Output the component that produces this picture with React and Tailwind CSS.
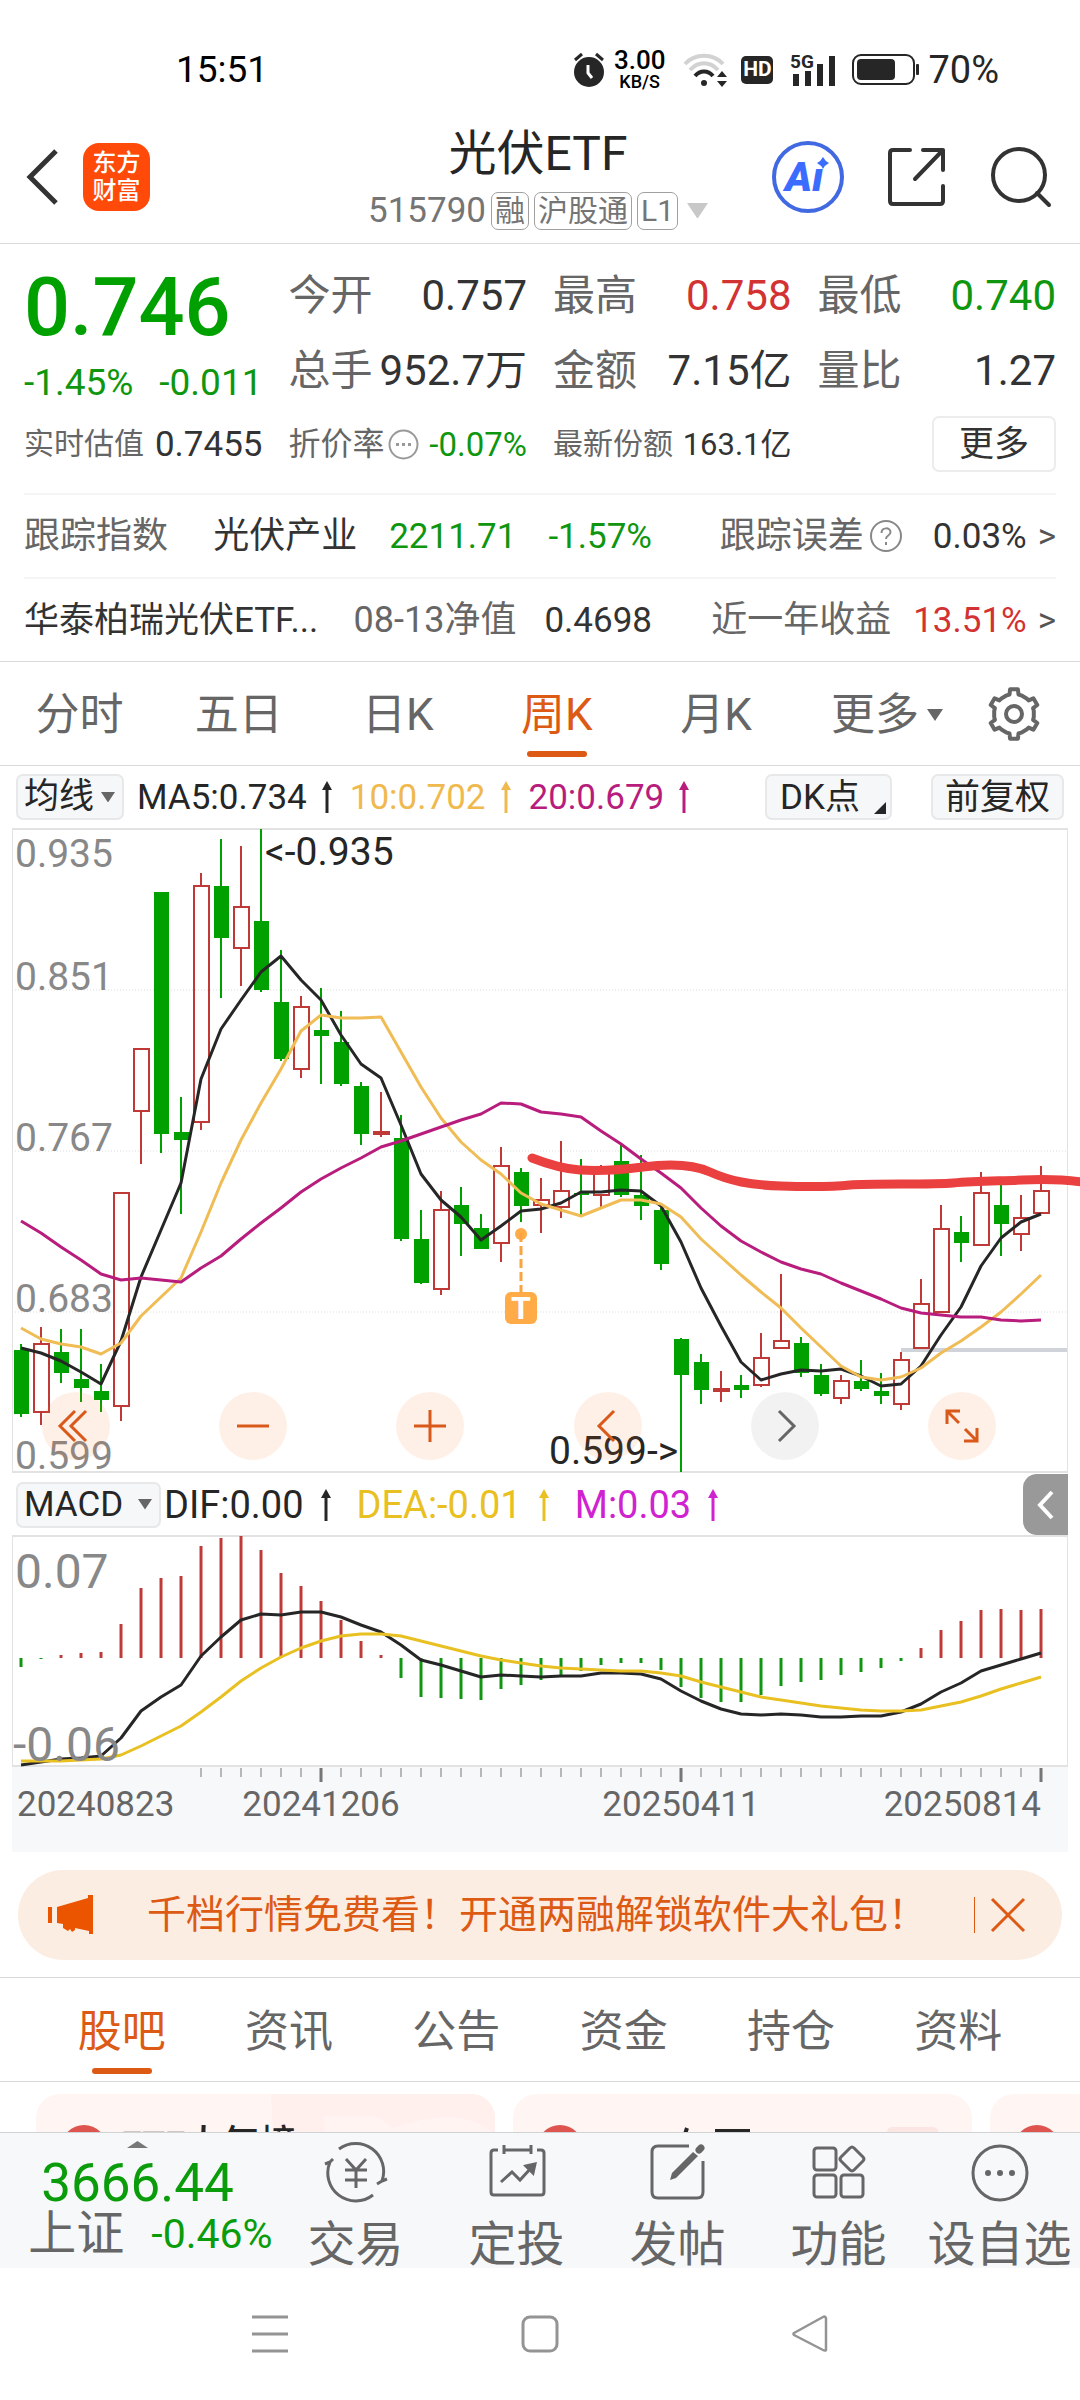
import { useState } from 'react';

const RED = '#bf3a36';
const GREEN = '#00a000';
const STEP = 20;
const FIRST_X = 21;

// Weekly candles: [direction, high, body top, body bottom, low] in chart units
const candles = [
  ['down', 1344, 1350, 1414, 1417],
  ['up', 1327, 1344, 1412, 1425],
  ['down', 1329, 1352, 1373, 1383],
  ['down', 1329, 1379, 1388, 1402],
  ['down', 1364, 1391, 1400, 1412],
  ['up', 1193, 1193, 1406, 1421],
  ['up', 1049, 1049, 1111, 1164],
  ['down', 892, 892, 1134, 1153],
  ['down', 1097, 1132, 1140, 1214],
  ['up', 873, 886, 1122, 1130],
  ['down', 839, 886, 938, 998],
  ['up', 846, 907, 948, 986],
  ['down', 829, 921, 990, 992],
  ['down', 950, 1002, 1059, 1061],
  ['up', 996, 1007, 1069, 1078],
  ['down', 988, 1030, 1036, 1084],
  ['down', 1011, 1042, 1084, 1086],
  ['down', 1082, 1086, 1134, 1145],
  ['up', 1092, 1132, 1134, 1137],
  ['down', 1115, 1138, 1239, 1241],
  ['down', 1210, 1239, 1283, 1284],
  ['up', 1191, 1210, 1289, 1295],
  ['down', 1187, 1205, 1224, 1256],
  ['down', 1214, 1228, 1249, 1249],
  ['up', 1147, 1166, 1243, 1262],
  ['down', 1168, 1172, 1206, 1222],
  ['up', 1178, 1200, 1205, 1233],
  ['up', 1141, 1191, 1207, 1218],
  ['down', 1159, 1193, 1195, 1217],
  ['up', 1165, 1169, 1195, 1208],
  ['down', 1144, 1161, 1195, 1197],
  ['down', 1155, 1195, 1206, 1220],
  ['down', 1208, 1210, 1264, 1270],
  ['down', 1338, 1339, 1375, 1472],
  ['down', 1354, 1362, 1390, 1404],
  ['up', 1371, 1389, 1391, 1402],
  ['down', 1375, 1385, 1390, 1398],
  ['up', 1333, 1358, 1385, 1387],
  ['up', 1274, 1341, 1348, 1348],
  ['down', 1337, 1343, 1373, 1377],
  ['down', 1364, 1375, 1394, 1396],
  ['up', 1375, 1381, 1398, 1404],
  ['down', 1360, 1381, 1389, 1391],
  ['down', 1373, 1391, 1396, 1404],
  ['up', 1352, 1360, 1404, 1410],
  ['up', 1279, 1304, 1348, 1348],
  ['up', 1205, 1229, 1312, 1312],
  ['down', 1216, 1232, 1243, 1262],
  ['up', 1172, 1193, 1245, 1245],
  ['down', 1182, 1205, 1224, 1256],
  ['up', 1195, 1218, 1234, 1251],
  ['up', 1166, 1191, 1213, 1213],
];

const ma5 = [1348, 1353, 1361, 1372, 1384, 1341, 1277, 1230, 1183, 1079, 1029, 1000, 972, 956, 980, 1000, 1035, 1064, 1078, 1125, 1174, 1200, 1217, 1240, 1226, 1211, 1209, 1203, 1192, 1192, 1190, 1191, 1206, 1242, 1288, 1326, 1362, 1380, 1374, 1370, 1371, 1369, 1376, 1386, 1384, 1366, 1335, 1307, 1266, 1238, 1222, 1214];
const ma10 = [1328, 1339, 1344, 1347, 1354, 1343, 1316, 1297, 1278, 1232, 1183, 1140, 1103, 1069, 1031, 1015, 1018, 1018, 1017, 1052, 1087, 1118, 1142, 1160, 1174, 1193, 1204, 1210, 1216, 1208, 1200, 1200, 1204, 1217, 1239, 1257, 1275, 1292, 1308, 1328, 1347, 1366, 1377, 1380, 1377, 1368, 1353, 1341, 1327, 1312, 1294, 1275];
const ma20 = [1221, 1233, 1247, 1260, 1274, 1280, 1278, 1280, 1282, 1268, 1256, 1239, 1223, 1208, 1192, 1179, 1168, 1158, 1147, 1141, 1134, 1127, 1120, 1114, 1103, 1104, 1112, 1114, 1117, 1131, 1144, 1159, 1173, 1188, 1208, 1226, 1241, 1252, 1262, 1269, 1274, 1283, 1291, 1299, 1308, 1313, 1315, 1317, 1317, 1320, 1321, 1320];

const MACD_ZERO = 1658;
const macdBars = [1667, 1659, 1655, 1653, 1652, 1624, 1588, 1578, 1576, 1546, 1538, 1536, 1550, 1573, 1586, 1601, 1620, 1641, 1655, 1678, 1697, 1698, 1699, 1700, 1689, 1685, 1680, 1675, 1671, 1665, 1663, 1663, 1670, 1687, 1698, 1702, 1702, 1695, 1686, 1682, 1680, 1675, 1672, 1668, 1661, 1648, 1630, 1621, 1610, 1609, 1610, 1609];
const dif = [1765, 1762, 1759, 1758, 1756, 1738, 1711, 1697, 1685, 1656, 1637, 1620, 1614, 1615, 1612, 1612, 1617, 1625, 1632, 1645, 1660, 1665, 1671, 1677, 1675, 1676, 1677, 1676, 1676, 1673, 1673, 1674, 1679, 1691, 1701, 1709, 1714, 1715, 1714, 1715, 1717, 1717, 1716, 1716, 1712, 1704, 1692, 1683, 1671, 1665, 1659, 1653];
const dea = [1761, 1761, 1761, 1760, 1759, 1755, 1746, 1736, 1726, 1712, 1697, 1681, 1668, 1657, 1648, 1641, 1636, 1634, 1634, 1636, 1641, 1646, 1651, 1656, 1660, 1663, 1666, 1668, 1669, 1670, 1671, 1671, 1673, 1676, 1682, 1687, 1692, 1697, 1700, 1703, 1706, 1708, 1710, 1711, 1711, 1710, 1706, 1702, 1696, 1689, 1683, 1677];

const xAt = (i) => FIRST_X + i * STEP;
const toPoints = (values) => values.map((y, i) => `${xAt(i)},${y}`).join(' ');

// Six-tooth gear outline around (29, 29)
function gearPath() {
  const pts = [];
  for (let i = 0; i < 6; i++) {
    const a = i * 60 - 90;
    [[-21, 20], [-13, 20], [-9, 25], [9, 25], [13, 20], [21, 20]].forEach(([d, r]) => {
      const rad = ((a + d) * Math.PI) / 180;
      pts.push(`${(29 + r * Math.cos(rad)).toFixed(1)} ${(29 + r * Math.sin(rad)).toFixed(1)}`);
    });
  }
  return `M${pts.join('L')}Z`;
}

function Triangle({ className }) {
  return (
    <svg viewBox="0 0 16 12" className={className} fill="currentColor" aria-hidden="true">
      <path d="M0 0H16L8 12Z" />
    </svg>
  );
}

function UpArrow() {
  return (
    <svg width="12" height="32" viewBox="0 0 12 32" className="shrink-0" aria-hidden="true">
      <path d="M6 5V32" stroke="currentColor" strokeWidth="3" />
      <path d="M6 0L11 9H1Z" fill="currentColor" />
    </svg>
  );
}

function StatusBar() {
  return (
    <div className="flex h-[110px] items-center justify-between pt-[29px] pr-[81px] pl-[176px] text-black">
      <span className="text-[37px] leading-none">15:51</span>
      <div className="flex items-center text-[#262626]">
        <svg width="32" height="36" viewBox="0 0 32 36" aria-hidden="true">
          <circle cx="16" cy="20" r="15" fill="currentColor" />
          <path d="M2 8L9 2M30 8L23 2" stroke="currentColor" strokeWidth="3" />
          <path d="M15 13V21L19 26" fill="none" stroke="#fff" strokeWidth="3" />
        </svg>
        <div className="ml-[9px] flex flex-col items-center font-medium text-black">
          <span className="text-[26px] leading-[25px]">3.00</span>
          <span className="text-[18px] leading-[18px]">KB/S</span>
        </div>
        <svg width="46" height="36" viewBox="0 0 46 36" className="ml-[18px]" fill="none" aria-hidden="true">
          <path d="M2 12C12 1 30 1 40 12" stroke="#d2d2d2" strokeWidth="4" />
          <path d="M7 18C15 9 27 9 35 18" stroke="#d2d2d2" strokeWidth="4" />
          <path d="M12 24C17 18 25 18 30 24" stroke="currentColor" strokeWidth="4" />
          <circle cx="21" cy="31" r="3" fill="currentColor" />
          <path d="M34 25L39 19L44 25ZM34 29H44L39 35Z" fill="currentColor" />
        </svg>
        <span className="ml-[12px] flex h-[28px] w-[32px] items-center justify-center rounded-[5px] bg-[#262626] text-[21px] leading-none font-bold text-white">
          HD
        </span>
        <svg width="46" height="34" viewBox="0 0 46 34" className="ml-[17px] overflow-visible" fill="currentColor" aria-hidden="true">
          <text x="0" y="15" fontSize="19" fontWeight="700">5G</text>
          <rect x="3" y="21" width="6" height="12" />
          <rect x="15" y="18" width="6" height="15" />
          <rect x="27" y="11" width="6" height="22" />
          <rect x="39" y="3" width="6" height="30" />
        </svg>
        <svg width="68" height="32" viewBox="0 0 68 32" className="ml-[16px]" aria-hidden="true">
          <rect x="1" y="1" width="61" height="29" rx="8" fill="none" stroke="currentColor" strokeWidth="2" />
          <rect x="5" y="5" width="38" height="21" rx="4" fill="currentColor" />
          <rect x="64" y="10" width="3" height="11" rx="1" fill="currentColor" />
        </svg>
        <span className="ml-[8px] text-[38px] leading-none">70%</span>
      </div>
    </div>
  );
}

function Header() {
  return (
    <header className="grid h-[134px] grid-cols-[1fr_auto_1fr] items-center border-b border-[#d9d9d9] pr-[28px] pl-[24px]">
      <div className="flex items-center gap-[23px]">
        <button type="button" aria-label="返回">
          <svg width="36" height="58" viewBox="0 0 36 58" fill="none" stroke="#333" strokeWidth="5" aria-hidden="true">
            <path d="M32 3L6 29L32 55" />
          </svg>
        </button>
        <a
          href="#home"
          className="flex h-[68px] w-[67px] flex-col items-center justify-center rounded-[16px] bg-[#ff4a0a] text-[24px] leading-[28px] font-medium text-white"
        >
          <span>东方</span>
          <span>财富</span>
        </a>
      </div>
      <div className="flex flex-col items-center gap-2">
        <h1 className="text-[48px] leading-[60px] text-[#262626]">光伏ETF</h1>
        <button type="button" className="flex items-center gap-[5px] text-[35px] leading-[38px] text-[#757575]">
          <span>515790</span>
          {['融', '沪股通', 'L1'].map((tag) => (
            <span key={tag} className="flex h-[38px] items-center rounded-[7px] border border-[#a0a0a0] px-[3px] text-[30px] leading-none">
              {tag}
            </span>
          ))}
          <Triangle className="ml-1 w-[21px] text-[#c8c8c8]" />
        </button>
      </div>
      <div className="flex items-center justify-end gap-[42px]">
        <button type="button" aria-label="AI 助手">
          <svg width="72" height="72" viewBox="0 0 72 72" aria-hidden="true">
            <circle cx="36" cy="36" r="34" fill="none" stroke="#4169e1" strokeWidth="4" />
            <text x="13" y="50" fontSize="41" fontWeight="900" fontStyle="italic" fill="#3b6cff">Aı</text>
            <path d="M51 16Q53 20 57 22Q53 24 51 28Q49 24 45 22Q49 20 51 16Z" fill="#3b6cff" />
          </svg>
        </button>
        <button type="button" aria-label="分享">
          <svg width="62" height="62" viewBox="0 0 62 62" fill="none" stroke="#333" strokeWidth="4" strokeLinecap="round" strokeLinejoin="round" aria-hidden="true">
            <path d="M24 4H7Q4 4 4 7V55Q4 58 7 58H54Q57 58 57 55V40M37 4H57V24M57 4L29 33" />
          </svg>
        </button>
        <button type="button" aria-label="搜索">
          <svg width="62" height="62" viewBox="0 0 62 62" fill="none" stroke="#333" strokeWidth="4" strokeLinecap="round" aria-hidden="true">
            <circle cx="29" cy="29" r="26" />
            <path d="M47 47L59 59" />
          </svg>
        </button>
      </div>
    </header>
  );
}

const quotes = [
  { label: '今开', value: '0.757', color: 'text-[#333]' },
  { label: '最高', value: '0.758', color: 'text-[#d23232]' },
  { label: '最低', value: '0.740', color: 'text-[#0f960f]' },
  { label: '总手', value: '952.7万', color: 'text-[#333]' },
  { label: '金额', value: '7.15亿', color: 'text-[#333]' },
  { label: '量比', value: '1.27', color: 'text-[#333]' },
];

function QuotePanel() {
  return (
    <section className="border-b border-[#d9d9d9] px-6 pt-[14px] text-[#333]">
      <div className="grid grid-cols-4 gap-x-[26px]">
        <div className="whitespace-nowrap text-[#0f960f]">
          <div className="flex h-[98px] items-center text-[81px] leading-none font-medium text-[#00a000]">0.746</div>
          <div className="flex h-[52px] items-center justify-between text-[37px] leading-none">
            <span>-1.45%</span>
            <span>-0.011</span>
          </div>
        </div>
        <dl className="col-span-3 grid grid-cols-3 gap-x-[26px]">
          {quotes.map((q) => (
            <div key={q.label} className="flex h-[75px] items-center justify-between text-[42px] leading-none whitespace-nowrap">
              <dt className="text-[#666]">{q.label}</dt>
              <dd className={q.color}>{q.value}</dd>
            </div>
          ))}
        </dl>
      </div>
      <div className="grid h-[72px] grid-cols-4 items-center gap-x-[26px] leading-none whitespace-nowrap">
        <div className="flex items-center justify-between">
          <span className="text-[30px] text-[#666]">实时估值</span>
          <span className="text-[35px]">0.7455</span>
        </div>
        <div className="flex items-center justify-between">
          <span className="flex items-center gap-[3px] text-[32px] text-[#666]">
            折价率
            <svg width="31" height="31" viewBox="0 0 31 31" fill="none" stroke="#999" strokeWidth="2" aria-hidden="true">
              <circle cx="15.5" cy="15.5" r="14" />
              <path d="M8 15.5H11M14 15.5H17M20 15.5H23" strokeWidth="3" />
            </svg>
          </span>
          <span className="text-[33px] text-[#0f960f]">-0.07%</span>
        </div>
        <div className="flex items-center justify-between">
          <span className="text-[30px] text-[#666]">最新份额</span>
          <span className="text-[31px]">163.1亿</span>
        </div>
        <button type="button" className="h-[56px] w-[124px] justify-self-end rounded-[7px] border-2 border-[#ececec] text-[35px]">
          更多
        </button>
      </div>
      <div className="mt-[13px] flex h-[84px] items-center border-t-2 border-[#f5f5f5] text-[35px] leading-none whitespace-nowrap">
        <div className="flex flex-[628] items-center gap-[32px]">
          <span className="mr-auto text-[36px] text-[#666]">跟踪指数</span>
          <span className="text-[36px]">光伏产业</span>
          <span className="text-[#0f960f]">2211.71</span>
          <span className="text-[#0f960f]">-1.57%</span>
        </div>
        <a href="#tracking" className="flex flex-[404] items-center justify-end">
          <span className="text-[36px] text-[#666]">跟踪误差</span>
          <svg width="34" height="34" viewBox="0 0 34 34" className="ml-[5px]" fill="none" stroke="#888" strokeWidth="2" aria-hidden="true">
            <circle cx="17" cy="17" r="15" />
            <path d="M12.500 14C12.500 8 21.500 8 21.500 13C21.500 17 17 16 17 20M17 23V26" />
          </svg>
          <span className="ml-[30px]">0.03%</span>
          <span className="ml-[11px] text-[35px] text-[#555]">&gt;</span>
        </a>
      </div>
      <div className="flex h-[84px] items-center border-t-2 border-[#f5f5f5] text-[35px] leading-none whitespace-nowrap">
        <div className="flex flex-[628] items-center gap-[28px]">
          <span className="mr-auto">华泰柏瑞光伏ETF...</span>
          <span className="text-[36px] text-[#666]">08-13净值</span>
          <span>0.4698</span>
        </div>
        <a href="#returns" className="flex flex-[404] items-center justify-end">
          <span className="text-[36px] text-[#666]">近一年收益</span>
          <span className="ml-[22px] text-[#d23232]">13.51%</span>
          <span className="ml-[11px] text-[35px] text-[#555]">&gt;</span>
        </a>
      </div>
    </section>
  );
}

const periods = ['分时', '五日', '日K', '周K', '月K', '更多'];

function PeriodTabs() {
  const [active, setActive] = useState('周K');
  return (
    <nav className="flex h-[104px] items-stretch border-b border-[#d9d9d9] text-[44px] leading-none text-[#666]">
      {periods.map((p) => (
        <button
          key={p}
          type="button"
          onClick={() => setActive(p)}
          className={`relative flex items-center justify-center pt-[3px] ${p === '更多' ? 'flex-[184]' : 'flex-[160]'} ${p === active ? 'text-[#dd5a14]' : ''}`}
        >
          {p}
          {p === '更多' && <Triangle className="ml-[8px] w-[16px]" />}
          {p === active && <span className="absolute bottom-[8px] h-[6px] w-[60px] rounded-full bg-[#dd5a14]" />}
        </button>
      ))}
      <button type="button" aria-label="设置" className="flex flex-[96] items-center pl-[6px]">
        <svg width="58" height="58" viewBox="0 0 58 58" fill="none" stroke="#666" strokeWidth="4" strokeLinejoin="round" aria-hidden="true">
          <path d={gearPath()} />
          <circle cx="29" cy="29" r="8" />
        </svg>
      </button>
    </nav>
  );
}

function IndicatorSelect({ label, value, className }) {
  return (
    <label className={`relative flex h-[46px] items-center rounded-[7px] border-2 border-[#e6e8ea] bg-[#f6f7f9] ${className}`}>
      <span className="sr-only">{label}</span>
      <select className="w-full appearance-none bg-transparent pl-[6px] text-[35px] leading-[42px] text-[#262626]">
        <option>{value}</option>
      </select>
      <Triangle className="pointer-events-none absolute right-[7px] w-[14px] text-[#666]" />
    </label>
  );
}

function MaLegend() {
  return (
    <div className="flex h-[62px] items-center pr-4 pl-4 text-[35px] leading-none whitespace-nowrap text-[#262626]">
      <IndicatorSelect label="主图指标" value="均线" className="w-[108px]" />
      <div className="ml-[13px] flex flex-1 items-center gap-[17px]">
        <span className="flex items-center gap-[14px]">MA5:0.734 <UpArrow /></span>
        <span className="flex items-center gap-[14px] text-[#f0b94e]">10:0.702 <UpArrow /></span>
        <span className="flex items-center gap-[14px] text-[#b81c7c]">20:0.679 <UpArrow /></span>
      </div>
      <button type="button" className="relative h-[46px] w-[127px] rounded-[7px] border-2 border-[#e6e8ea] bg-[#f6f7f9] pl-[13px] text-left">
        DK点
        <svg width="12" height="12" viewBox="0 0 12 12" className="absolute right-[4px] bottom-[4px]" aria-hidden="true">
          <path d="M12 0V12H0Z" fill="#262626" />
        </svg>
      </button>
      <button type="button" className="ml-[39px] h-[46px] w-[133px] rounded-[7px] border-2 border-[#e6e8ea] bg-[#f6f7f9]">
        前复权
      </button>
    </div>
  );
}

function Candle({ candle, x }) {
  const [dir, high, top, bottom, low] = candle;
  if (dir === 'down') {
    return (
      <g fill={GREEN}>
        <rect x={x - 1} y={high} width="2" height={low - high} />
        <rect x={x - 7} y={top} width="15" height={bottom - top} />
      </g>
    );
  }
  return (
    <g fill="none" stroke={RED} strokeWidth="2">
      <path d={`M${x} ${high}V${top}M${x} ${bottom}V${low}`} />
      <rect x={x - 7} y={top} width="15" height={bottom - top} />
    </g>
  );
}

const controls = [
  { label: '最左', tone: 'bg-[#ff6a10]/10 text-[#d8591a]', d: 'M33 19L18 34L33 49M44 19L29 34L44 49' },
  { label: '缩小', tone: 'bg-[#ff6a10]/10 text-[#d8591a]', d: 'M18 34H50' },
  { label: '放大', tone: 'bg-[#ff6a10]/10 text-[#d8591a]', d: 'M18 34H50M34 18V50' },
  { label: '左移', tone: 'bg-[#ff6a10]/10 text-[#d8591a]', d: 'M40 19L25 34L40 49' },
  { label: '右移', tone: 'bg-black/5 text-[#666]', d: 'M28 19L43 34L28 49' },
  { label: '全屏', tone: 'bg-[#ff6a10]/10 text-[#d8591a]', d: 'M19 32V19H32M19 19L31 31M37 37L49 49M49 36V49H36' },
];

function PriceChart() {
  return (
    <div className="relative">
      <svg viewBox="0 828 1080 646" className="block h-auto w-full overflow-visible" role="img" aria-label="周K线图">
        <path d="M12 829H1068M12 1472H1068" stroke="#e2e2e2" strokeWidth="2" />
        <path d="M12.500 829V1472M1067.500 829V1472" stroke="#e2e2e2" />
        <path d="M12 990H1067M12 1151H1067M12 1312H1067" stroke="#dcdcdc" strokeDasharray="1 2" />
        <path d="M901 1350H1067" stroke="#d0d4da" strokeWidth="4" />
        {candles.map((c, i) => (
          <Candle key={i} candle={c} x={xAt(i)} />
        ))}
        <g fill="none" strokeWidth="3" strokeLinejoin="round">
          <polyline points={toPoints(ma5)} stroke="#262626" />
          <polyline points={toPoints(ma10)} stroke="#f0bc55" />
          <polyline points={toPoints(ma20)} stroke="#b81c7c" />
        </g>
        <circle cx="521" cy="1234" r="6" fill="#ffab48" />
        <path d="M521 1233V1292" stroke="#f9a441" strokeWidth="3" strokeDasharray="9 4" />
        <rect x="505" y="1292" width="32" height="32" rx="6" fill="#ffab48" />
        <text x="521" y="1319" textAnchor="middle" fontSize="32" fontWeight="700" fill="#fff">T</text>
        <path
          d="M532 1158C550 1165 565 1169 580 1170S620 1170 643 1167S690 1163 710 1172S750 1185 781 1186S830 1187 850 1185S930 1185 953 1183S1000 1181 1022 1180S1060 1179 1082 1182"
          fill="none"
          stroke="#ea4040"
          strokeWidth="9"
          strokeLinecap="round"
        />
        <g fontSize="39" fill="#888">
          <text x="15" y="867">0.935</text>
          <text x="15" y="990">0.851</text>
          <text x="15" y="1151">0.767</text>
          <text x="15" y="1312">0.683</text>
          <text x="15" y="1469">0.599</text>
        </g>
        <g fontSize="39" fill="#262626">
          <text x="265" y="865">&lt;-0.935</text>
          <text x="549" y="1464">0.599-&gt;</text>
        </g>
      </svg>
      <div className="absolute right-[84px] bottom-[14px] left-[42px] flex justify-between">
        {controls.map((c) => (
          <button key={c.label} type="button" aria-label={c.label} className={`h-[68px] w-[68px] rounded-full ${c.tone}`}>
            <svg viewBox="0 0 68 68" fill="none" stroke="currentColor" strokeWidth="3" aria-hidden="true">
              <path d={c.d} />
            </svg>
          </button>
        ))}
      </div>
    </div>
  );
}

function MacdChart() {
  return (
    <>
      <div className="flex h-[61px] items-center pr-3 pl-4 text-[38px] leading-none whitespace-nowrap text-[#262626]">
        <IndicatorSelect label="副图指标" value="MACD" className="w-[145px]" />
        <div className="ml-[3px] flex flex-1 items-center gap-[25px]">
          <span className="flex items-center gap-[16px]">DIF:0.00 <UpArrow /></span>
          <span className="flex items-center gap-[16px] text-[#e9c022]">DEA:-0.01 <UpArrow /></span>
          <span className="flex items-center gap-[16px] text-[#cf23cf]">M:0.03 <UpArrow /></span>
        </div>
        <button type="button" aria-label="展开" className="flex h-[61px] w-[45px] items-center justify-center rounded-l-[14px] bg-[#999]">
          <svg width="20" height="32" viewBox="0 0 20 32" fill="none" stroke="#fff" strokeWidth="4" aria-hidden="true">
            <path d="M16 3L4 16L16 29" />
          </svg>
        </button>
      </div>
      <svg viewBox="0 1535 1080 317" className="block h-auto w-full" role="img" aria-label="MACD">
        <rect x="12" y="1767" width="1056" height="85" fill="#f7f8fa" />
        <path d="M12 1536H1068M12 1766H1068" stroke="#e2e2e2" strokeWidth="2" />
        <path d="M12.500 1536V1766M1067.500 1536V1766" stroke="#e2e2e2" />
        {macdBars.map((y, i) => (
          <path key={i} d={`M${xAt(i)} ${MACD_ZERO}V${y}`} stroke={y < MACD_ZERO ? RED : '#109610'} strokeWidth="3" />
        ))}
        <g fill="none" strokeWidth="3" strokeLinejoin="round">
          <polyline points={toPoints(dif)} stroke="#262626" />
          <polyline points={toPoints(dea)} stroke="#e9c022" />
        </g>
        <g fontSize="48" fill="#888">
          <text x="15" y="1588">0.07</text>
          <text x="13" y="1761">-0.06</text>
        </g>
        {macdBars.map((_, i) => {
          if (i < 9) return null;
          const major = i % 18 === 15;
          return <path key={i} d={`M${xAt(i)} 1768V${major ? 1782 : 1777}`} stroke="#777" strokeWidth={major ? 3 : 1} />;
        })}
        <g fontSize="35" fill="#666">
          <text x="17" y="1816">20240823</text>
          <text x="321" y="1816" textAnchor="middle">20241206</text>
          <text x="681" y="1816" textAnchor="middle">20250411</text>
          <text x="1041" y="1816" textAnchor="end">20250814</text>
        </g>
      </svg>
    </>
  );
}

function Banner() {
  return (
    <div className="mx-[18px] mt-[18px] mb-[17px] flex h-[90px] items-center rounded-full bg-[#fcede3] pr-[36px] pl-[30px] text-[#dd5a14]">
      <svg width="46" height="40" viewBox="0 0 46 40" fill="#eb5500" aria-hidden="true">
        <path d="M0 12H4V28H0ZM9 12L40 3V0H45V39H41V36L27 33V35L24 37L22 34L20 36L15 33V29L9 28Z" />
      </svg>
      <a href="#promo" className="ml-[53px] flex-1 text-[39px] leading-none whitespace-nowrap">
        千档行情免费看！开通两融解锁软件大礼包！
      </a>
      <span className="h-[36px] w-px bg-[#dd5a14]" />
      <button type="button" aria-label="关闭" className="ml-[15px]">
        <svg width="36" height="36" viewBox="0 0 36 36" stroke="currentColor" strokeWidth="3" aria-hidden="true">
          <path d="M2 2L34 34M34 2L2 34" />
        </svg>
      </button>
    </div>
  );
}

const sections = ['股吧', '资讯', '公告', '资金', '持仓', '资料'];

function SectionTabs() {
  const [active, setActive] = useState('股吧');
  return (
    <nav className="flex h-[105px] border-y border-[#d9d9d9] px-[38px] text-[44px] leading-none text-[#666]">
      {sections.map((s) => (
        <button
          key={s}
          type="button"
          onClick={() => setActive(s)}
          className={`relative flex flex-1 items-center justify-center pt-[5px] ${s === active ? 'text-[#dd5a14]' : ''}`}
        >
          {s}
          {s === active && <span className="absolute bottom-[7px] h-[6px] w-[60px] rounded-full bg-[#dd5a14]" />}
        </button>
      ))}
    </nav>
  );
}

function TopicCards() {
  return (
    <div className="flex h-[50px] gap-[18px] overflow-hidden pt-[12px] pl-[36px]">
      <div className="relative flex h-[120px] w-[459px] shrink-0 overflow-hidden rounded-[24px] bg-[#fff6f4] pt-[31px] pl-[25px]">
        <svg width="224" height="120" viewBox="0 0 224 120" className="absolute top-0 right-0" aria-hidden="true">
          <path d="M0 0H224V120H6Z" fill="#ffefed" />
          <path d="M52 22H105L122 34Q190 10 224 40V120H62Z" fill="#fff4f2" />
        </svg>
        <span className="h-[46px] w-[46px] rounded-full bg-[#dd554e]" />
        <span className="relative ml-[14px] text-[37px] leading-[40px] font-medium text-[#262626]">
          <span className="text-[#cfc8c7]">ETF</span>人气榜
        </span>
      </div>
      <div className="relative h-[120px] w-[459px] shrink-0 rounded-[24px] bg-[#fff6f4] pt-[31px] pl-[24px]">
        <span className="block h-[46px] w-[46px] rounded-full bg-[#dd554e]" />
        <svg width="260" height="30" viewBox="0 0 260 30" className="absolute top-[32px] left-[170px]" aria-hidden="true">
          <path d="M4 2L2 8M32 5H67" stroke="#262626" strokeWidth="4" />
          <rect x="204" y="1" width="51" height="30" rx="5" fill="#fbe6e4" />
        </svg>
      </div>
      <div className="h-[120px] w-[459px] shrink-0 rounded-[24px] bg-[#fff6f4] pt-[31px] pl-[24px]">
        <span className="block h-[46px] w-[46px] rounded-full bg-[#dd554e]" />
      </div>
    </div>
  );
}

const actions = [
  {
    label: '交易',
    icon: (
      <>
        <path d="M16 7A28 28 0 0 1 59 39M59 39L54 42M59 39L64 37M50 53A28 28 0 0 1 7 20M7 20L2 22M7 20L10 17" />
        <path d="M23 17L33 28L43 17M33 28V46M22 28H44M22 38H44" />
      </>
    ),
  },
  {
    label: '定投',
    icon: (
      <>
        <path d="M14 8H10Q7 8 7 11V50Q7 53 10 53H57Q60 53 60 50V11Q60 8 57 8H53M20 8H47M20 3V12M47 3V12" />
        <path d="M17 40L28 30L36 38L48 25" />
        <path d="M42 24L51 22L49 31Z" fill="currentColor" />
      </>
    ),
  },
  {
    label: '发帖',
    icon: (
      <>
        <path d="M44 4H13Q7 4 7 10V50Q7 56 13 56H52Q58 56 58 50V19" />
        <path d="M25 38L27 31L48 10L53 14L31 36Z" fill="currentColor" stroke="none" />
        <path d="M54 8L56 6" strokeWidth="7" strokeLinecap="round" />
      </>
    ),
  },
  {
    label: '功能',
    icon: (
      <>
        <rect x="8" y="6" width="22" height="22" rx="3" />
        <rect x="8" y="33" width="22" height="22" rx="3" />
        <rect x="35" y="33" width="22" height="22" rx="3" />
        <path d="M44 6Q46 4 48 6L57 15Q59 17 57 19L48 28Q46 30 44 28L35 19Q33 17 35 15Z" />
      </>
    ),
  },
  {
    label: '设自选',
    icon: (
      <>
        <circle cx="33" cy="31" r="27" />
        <path d="M21 31H21.010M33 31H33.010M45 31H45.010" strokeWidth="6" strokeLinecap="round" />
      </>
    ),
  },
];

function BottomBar() {
  return (
    <footer className="flex h-[136px] border-t border-[#d0d2d4] bg-[#f7f8fa] text-[#666]">
      <button type="button" className="flex flex-[275] flex-col items-center pt-[8px] leading-none whitespace-nowrap">
        <svg width="21" height="7" viewBox="0 0 21 7" fill="#777" aria-hidden="true">
          <path d="M0 7L10.500 0L21 7Z" />
        </svg>
        <span className="pt-[9px] text-[53px] text-[#0a9c0a]">3666.44</span>
        <span className="flex items-center gap-[27px] pl-[26px] text-[48px]">
          上证 <span className="text-[41px] text-[#0a9c0a]">-0.46%</span>
        </span>
      </button>
      {actions.map((a) => (
        <button key={a.label} type="button" className="flex flex-[161] flex-col items-center pt-[9px] text-[48px] leading-[40px] whitespace-nowrap">
          <svg width="66" height="62" viewBox="0 0 66 62" className="shrink-0" fill="none" stroke="currentColor" strokeWidth="3" aria-hidden="true">
            {a.icon}
          </svg>
          <span className="pt-[21px]">{a.label}</span>
        </button>
      ))}
    </footer>
  );
}

function SystemNav() {
  return (
    <div className="flex h-[132px] items-center justify-center gap-[230px] text-[#949494]">
      <button type="button" aria-label="最近任务">
        <svg width="40" height="40" viewBox="0 0 40 40" stroke="currentColor" strokeWidth="3" aria-hidden="true">
          <path d="M2 3H38M2 20H38M2 37H38" />
        </svg>
      </button>
      <button type="button" aria-label="主屏幕">
        <svg width="40" height="40" viewBox="0 0 40 40" fill="none" stroke="currentColor" strokeWidth="3" aria-hidden="true">
          <rect x="3" y="3" width="34" height="34" rx="7" />
        </svg>
      </button>
      <button type="button" aria-label="后退">
        <svg width="40" height="40" viewBox="0 0 40 40" fill="none" stroke="currentColor" strokeWidth="2.5" strokeLinejoin="round" aria-hidden="true">
          <path d="M36 4V36Q35 37 33 36L4 21Q3 20 4 19L33 3Q35 2 36 4Z" />
        </svg>
      </button>
    </div>
  );
}

export default function App() {
  return (
    <div className="min-h-screen w-full overflow-x-hidden bg-white font-[Roboto,'Noto_Sans_CJK_SC',sans-serif]">
      <StatusBar />
      <Header />
      <main>
        <QuotePanel />
        <PeriodTabs />
        <MaLegend />
        <PriceChart />
        <MacdChart />
        <Banner />
        <SectionTabs />
        <TopicCards />
      </main>
      <BottomBar />
      <SystemNav />
    </div>
  );
}
